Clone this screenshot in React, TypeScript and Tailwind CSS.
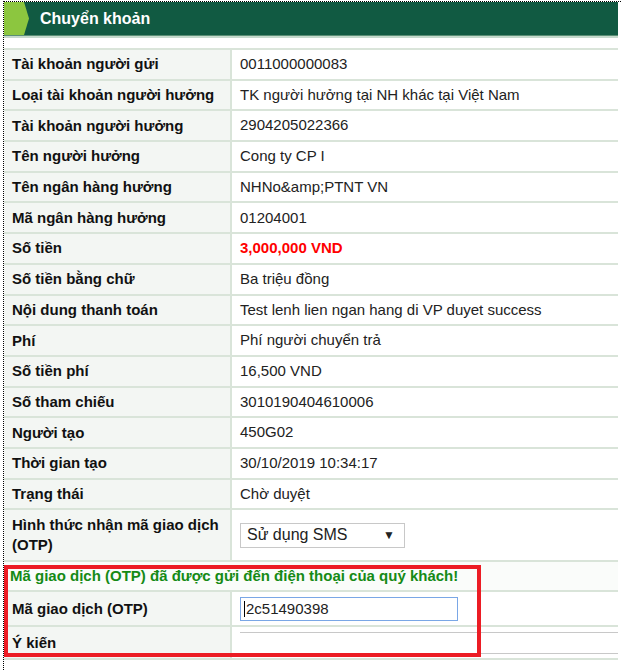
import React from "react";

const rows: [string, React.ReactNode][] = [
  ["Tài khoản người gửi", "0011000000083"],
  ["Loại tài khoản người hưởng", "TK người hưởng tại NH khác tại Việt Nam"],
  ["Tài khoản người hưởng", "2904205022366"],
  ["Tên người hưởng", "Cong ty CP I"],
  ["Tên ngân hàng hưởng", "NHNo&amp;PTNT VN"],
  ["Mã ngân hàng hưởng", "01204001"],
  ["Số tiền", <span className="font-bold text-[#ff0000]">3,000,000 VND</span>],
  ["Số tiền bằng chữ", "Ba triệu đồng"],
  ["Nội dung thanh toán", "Test lenh lien ngan hang di VP duyet success"],
  ["Phí", "Phí người chuyển trả"],
  ["Số tiền phí", "16,500 VND"],
  ["Số tham chiếu", "3010190404610006"],
  ["Người tạo", "450G02"],
  ["Thời gian tạo", "30/10/2019 10:34:17"],
  ["Trạng thái", "Chờ duyệt"],
];

function Row({ label, children, h = "h-[30.7px]" }: { label: React.ReactNode; children: React.ReactNode; h?: string }) {
  return (
    <div className={`flex ${h} border-b-2 border-[#d9e4d9]`}>
      <div className="w-[228px] shrink-0 bg-[#f3f6f3] border-r-2 border-[#d9e4d9] pl-[8px] flex items-center font-bold text-[15px] text-[#111] leading-[20px]">
        {label}
      </div>
      <div className="flex-1 pl-[8px] flex items-center text-[15px] text-[#222]">{children}</div>
    </div>
  );
}

export default function App() {
  return (
    <div className="w-[633px] h-[670px] bg-white relative" style={{ fontFamily: '"Liberation Sans", Arial, sans-serif' }}>
      <div className="absolute left-[3px] top-[1px] w-[618px] h-[669px] border-l border-t border-dotted border-black pointer-events-none" />
      <div className="pl-[4px] pt-[2px] w-[618px]">
        <div className="relative h-[33px] bg-[#115a42] flex items-center">
          <svg className="absolute left-0 top-0" width="26" height="33" viewBox="0 0 26 33">
            <polygon points="0,0 20,0 25,16.5 20,33 0,33" fill="#8cc63f" />
          </svg>
          <span className="ml-[36px] text-white font-bold text-[16px]">Chuyển khoản</span>
        </div>
        <div className="h-[1px] bg-[#5a8f75]" />
        <div className="h-[2px] bg-[#c5d9cc]" />
        <div className="h-[10px]" />
        <div className="border-t-2 border-[#d9e4d9]">
          {rows.map(([l, v], i) => (
            <Row key={i} label={l}>{v}</Row>
          ))}
          <Row label={<span>Hình thức nhận mã giao dịch<br />(OTP)</span>} h="h-[52px]">
            <div className="w-[165px] h-[25px] border border-[#c8c8c8] flex items-center justify-between px-[6px] text-[16px] text-[#222]">
              <span>Sử dụng SMS</span>
              <span className="text-[12px] mr-[3px]">▼</span>
            </div>
          </Row>
          <div className="h-[30px] border-b-2 border-[#d9e4d9] bg-[#fafcfa] flex items-center pl-[6px] text-[15px] font-bold text-[#158a15]">
            Mã giao dịch (OTP) đã được gửi đến điện thoại của quý khách!
          </div>
          <Row label="Mã giao dịch (OTP)" h="h-[35px]">
            <div className="w-[218px] h-[24px] border border-[#7aa7e6] flex items-center pl-[3px] text-[15px] text-[#222]">
              <span className="inline-block w-[1px] h-[16px] bg-black mr-[1px]" />2c51490398
            </div>
          </Row>
          <Row label="Ý kiến" h="h-[33px]">
            <div className="w-full h-[22px] border-y border-[#c8c8c8]" />
          </Row>
        </div>
      </div>
      <div className="absolute left-[4px] top-[565px] w-[477px] h-[92px] border-[4px] border-[#ec1c24] pointer-events-none" />
    </div>
  );
}
